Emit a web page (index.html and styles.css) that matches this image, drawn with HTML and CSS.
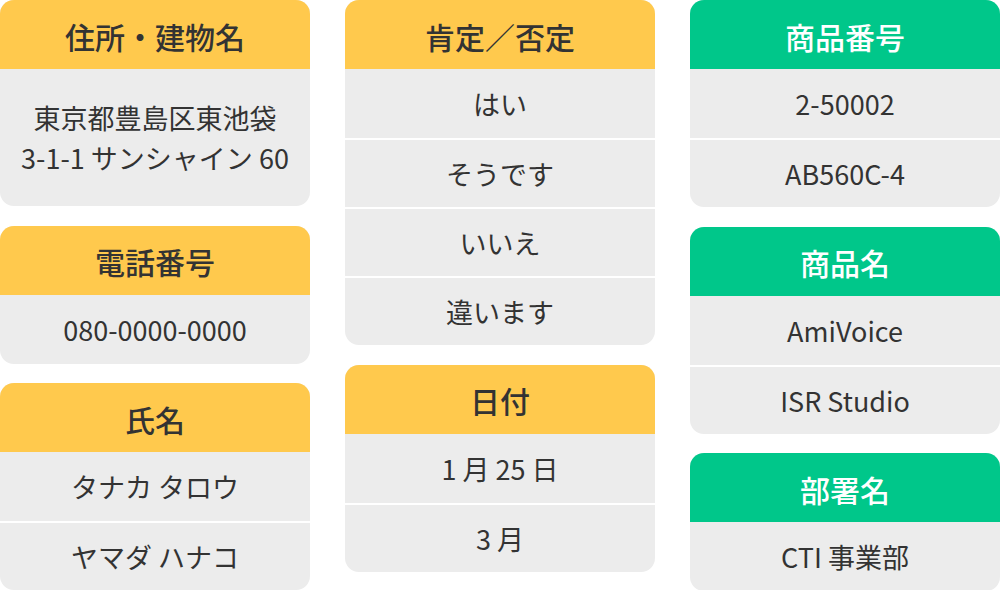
FILE: index.html
```html
<!DOCTYPE html>
<html lang="ja">
<head>
<meta charset="utf-8">
<link rel="stylesheet" href="styles.css">
</head>
<body>
<div class="board">
  <div class="col">
    <div class="card">
      <div class="head yellow">住所・建物名</div>
      <div class="row tall">東京都豊島区東池袋<br>3-1-1 サンシャイン 60</div>
    </div>
    <div class="card">
      <div class="head yellow">電話番号</div>
      <div class="row">080-0000-0000</div>
    </div>
    <div class="card">
      <div class="head yellow">氏名</div>
      <div class="row">タナカ タロウ</div>
      <div class="row">ヤマダ ハナコ</div>
    </div>
  </div>
  <div class="col">
    <div class="card">
      <div class="head yellow">肯定／否定</div>
      <div class="row">はい</div>
      <div class="row">そうです</div>
      <div class="row">いいえ</div>
      <div class="row">違います</div>
    </div>
    <div class="card">
      <div class="head yellow">日付</div>
      <div class="row">1 月 25 日</div>
      <div class="row">3 月</div>
    </div>
  </div>
  <div class="col">
    <div class="card">
      <div class="head green">商品番号</div>
      <div class="row">2-50002</div>
      <div class="row">AB560C-4</div>
    </div>
    <div class="card">
      <div class="head green">商品名</div>
      <div class="row">AmiVoice</div>
      <div class="row">ISR Studio</div>
    </div>
    <div class="card">
      <div class="head green">部署名</div>
      <div class="row">CTI 事業部</div>
    </div>
  </div>
</div>
</body>
</html>
```

FILE: styles.css
```css
html, body {
  margin: 0;
  padding: 0;
  background: #ffffff;
}
body {
  font-family: "Noto Sans CJK JP", "Noto Sans", sans-serif;
  color: #333333;
}
.board {
  display: flex;
  gap: 35px;
  width: 1000px;
}
.col {
  width: 310px;
  display: flex;
  flex-direction: column;
  gap: 19.5px;
}
.card {
  border-radius: 14px;
  overflow: hidden;
  background: #ececec;
}
.head {
  height: 69px;
  display: flex;
  align-items: center;
  justify-content: center;
  font-size: 30px;
  font-weight: 500;
  padding-top: 2px;
  box-sizing: border-box;
}
.yellow {
  background: #ffc94d;
  color: #333333;
}
.green {
  background: #00c78a;
  color: #ffffff;
}
.row {
  height: 69px;
  box-sizing: border-box;
  display: flex;
  align-items: center;
  justify-content: center;
  text-align: center;
  font-size: 27px;
  font-weight: 400;
}
.row + .row {
  border-top: 2px solid #ffffff;
}
.tall {
  height: 137px;
  line-height: 40px;
}
```
